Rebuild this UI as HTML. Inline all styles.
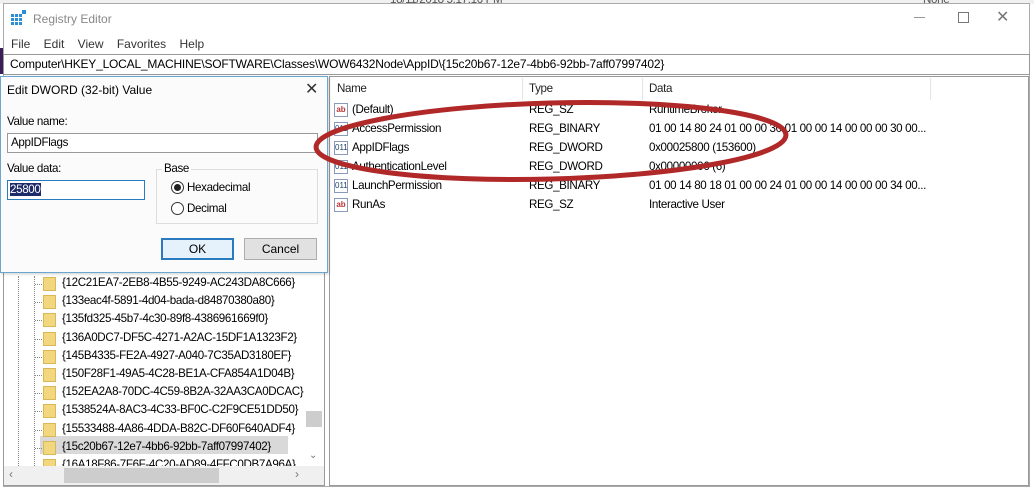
<!DOCTYPE html>
<html><head><meta charset="utf-8"><style>
*{margin:0;padding:0;box-sizing:border-box}
body{width:1034px;height:489px;overflow:hidden;background:#fff;font-family:"Liberation Sans",sans-serif;font-size:12px;color:#000;position:relative}
.a{position:absolute;white-space:nowrap}
.t{letter-spacing:-0.35px;font-size:11.6px}
.ico{position:absolute;width:14px;height:14px;border:1px solid #8a9ab8;background:#fff;font-size:8px;line-height:12px;text-align:center}
.fold{position:absolute;width:13px;height:14px;background:#f3d77e;border:1px solid #d9b957}
</style></head><body>
<div class="a" style="left:0;top:0;width:1034px;height:4px;background:#f0f0f0"></div>
<div class="a" style="left:0;top:48px;width:3px;height:26px;background:#3a1e5a"></div>
<div class="a" style="left:3px;top:3px;width:1027px;height:484px;border:1px solid #aaa;background:#fff"></div>
<svg class="a" style="left:11px;top:10px" width="16" height="16"><g fill="#2a8fd4"><rect x="0" y="4" width="3" height="3"/><rect x="4" y="4" width="3" height="3"/><rect x="8" y="4" width="3" height="3"/><rect x="0" y="8" width="3" height="3"/><rect x="4" y="8" width="3" height="3"/><rect x="8" y="8" width="3" height="3"/><rect x="0" y="12" width="3" height="3"/><rect x="4" y="12" width="3" height="3"/><rect x="8" y="12" width="3" height="3"/><rect x="11" y="0" width="4" height="4"/></g></svg>
<div class="a" style="left:33px;top:12px;font-size:12px;color:#888">Registry Editor</div>
<div class="a t" style="left:390px;top:-7px;color:#555">18/11/2018 5:17:16 PM</div>
<div class="a t" style="left:923px;top:-7px;color:#555">None</div>
<div class="a" style="left:914px;top:17px;width:11px;height:1px;background:#999"></div>
<div class="a" style="left:958px;top:12px;width:11px;height:11px;border:1px solid #777"></div>
<div class="a" style="left:996px;top:7px;font-size:16px;color:#777">✕</div>
<div class="a" style="left:11px;top:37px;font-size:12px;color:#333">File&nbsp;&nbsp;&nbsp; Edit&nbsp;&nbsp;&nbsp; View&nbsp;&nbsp;&nbsp; Favorites&nbsp;&nbsp;&nbsp; Help</div>
<div class="a" style="left:3px;top:54px;width:1027px;height:21px;border:1px solid #999;background:#fff"></div>
<div class="a" style="left:10px;top:57px;letter-spacing:-0.2px">Computer\HKEY_LOCAL_MACHINE\SOFTWARE\Classes\WOW6432Node\AppID\{15c20b67-12e7-4bb6-92bb-7aff07997402}</div>
<div class="a" style="left:3px;top:76px;width:322px;height:410px;border:1px solid #999"></div>
<div class="a" style="left:329px;top:76px;width:700px;height:410px;border:1px solid #999"></div>
<div class="a t" style="left:337px;top:82px;color:#222">Name</div>
<div class="a t" style="left:529px;top:82px;color:#222">Type</div>
<div class="a t" style="left:649px;top:82px;color:#222">Data</div>
<div class="a" style="left:522px;top:78px;width:1px;height:22px;background:#e5e5e5"></div>
<div class="a" style="left:642px;top:78px;width:1px;height:22px;background:#e5e5e5"></div>
<div class="a" style="left:930px;top:78px;width:1px;height:22px;background:#e5e5e5"></div>
<div class="ico" style="left:334px;top:103px;color:#b33;font-weight:bold">ab</div>
<div class="ico" style="left:334px;top:122px;color:#246">011</div>
<div class="ico" style="left:334px;top:141px;color:#246">011</div>
<div class="ico" style="left:334px;top:160px;color:#246">011</div>
<div class="ico" style="left:334px;top:179px;color:#246">011</div>
<div class="ico" style="left:334px;top:198px;color:#b33;font-weight:bold">ab</div>
<div class="a t" style="left:352px;top:103px">(Default)</div>
<div class="a t" style="left:352px;top:122px">AccessPermission</div>
<div class="a t" style="left:352px;top:141px">AppIDFlags</div>
<div class="a t" style="left:352px;top:160px">AuthenticationLevel</div>
<div class="a t" style="left:352px;top:179px">LaunchPermission</div>
<div class="a t" style="left:352px;top:198px">RunAs</div>
<div class="a t" style="left:529px;top:103px">REG_SZ</div>
<div class="a t" style="left:529px;top:122px">REG_BINARY</div>
<div class="a t" style="left:529px;top:141px">REG_DWORD</div>
<div class="a t" style="left:529px;top:160px">REG_DWORD</div>
<div class="a t" style="left:529px;top:179px">REG_BINARY</div>
<div class="a t" style="left:529px;top:198px">REG_SZ</div>
<div class="a t" style="left:649px;top:103px">RuntimeBroker</div>
<div class="a t" style="left:649px;top:122px">01 00 14 80 24 01 00 00 30 01 00 00 14 00 00 00 30 00...</div>
<div class="a t" style="left:649px;top:141px">0x00025800 (153600)</div>
<div class="a t" style="left:649px;top:160px">0x00000006 (6)</div>
<div class="a t" style="left:649px;top:179px">01 00 14 80 18 01 00 00 24 01 00 00 14 00 00 00 34 00...</div>
<div class="a t" style="left:649px;top:198px">Interactive User</div>
<div class="a" style="left:18px;top:276px;width:1px;height:190px;border-left:1px dotted #888"></div>
<div class="a" style="left:34px;top:276px;width:1px;height:190px;border-left:1px dotted #888"></div>
<div class="a" style="left:40px;top:436px;width:248px;height:18px;background:#d9d9d9"></div>
<div id="tree"></div>
<div class="a" style="left:306px;top:411px;width:16px;height:16px;background:#cdcdcd"></div>
<div class="a" style="left:309px;top:450px;color:#777;font-size:10px">⌄</div>
<div class="a" style="left:4px;top:466px;width:320px;height:19px;background:#f0f0f0"></div>
<div class="a" style="left:64px;top:468px;width:155px;height:15px;background:#cdcdcd"></div>
<div class="a" style="left:9px;top:467px;color:#777">‹</div>
<div class="a" style="left:295px;top:467px;color:#777">›</div>
<div class="a" style="left:0;top:76px;width:328px;height:197px;background:#fbfbfb;border:1px solid #6aa6cf;box-shadow:1px 1px 3px rgba(0,0,0,.2)"></div>
<div class="a" style="left:7px;top:83px;font-size:12px">Edit DWORD (32-bit) Value</div>
<div class="a" style="left:305px;top:79px;font-size:16px;color:#333">✕</div>
<div class="a t" style="left:7px;top:115px">Value name:</div>
<div class="a t" style="left:7px;top:133px;width:311px;height:20px;border:1px solid #999;background:#fff;padding:2px 3px">AppIDFlags</div>
<div class="a t" style="left:7px;top:162px">Value data:</div>
<div class="a t" style="left:7px;top:180px;width:138px;height:20px;border:1px solid #2a7ac0;background:#fff;padding:2px 2px"><span style="background:#1e2b6b;color:#fff">25800</span></div>
<div class="a" style="left:156px;top:169px;width:162px;height:55px;border:1px solid #ddd"></div>
<div class="a t" style="left:162px;top:162px;background:#fbfbfb;padding:0 2px">Base</div>
<div class="a" style="left:171px;top:181px;width:13px;height:13px;border:1px solid #333;border-radius:50%;background:#fff"><div style="width:7px;height:7px;background:#222;border-radius:50%;margin:2px"></div></div>
<div class="a t" style="left:187px;top:181px">Hexadecimal</div>
<div class="a" style="left:171px;top:202px;width:13px;height:13px;border:1px solid #333;border-radius:50%;background:#fff"></div>
<div class="a t" style="left:187px;top:202px">Decimal</div>
<div class="a" style="left:161px;top:238px;width:73px;height:22px;border:2px solid #2a7ac0;background:#e5f1fb;text-align:center;line-height:18px">OK</div>
<div class="a" style="left:244px;top:238px;width:73px;height:22px;border:1px solid #adadad;background:#e1e1e1;text-align:center;line-height:20px">Cancel</div>
<svg class="a" style="left:0;top:0" width="1034" height="489"><ellipse cx="551" cy="141" rx="235" ry="38" transform="rotate(-1.5 551 141)" fill="none" stroke="#b02828" stroke-width="5"/></svg>
<script>
var t=["{12C21EA7-2EB8-4B55-9249-AC243DA8C666}","{133eac4f-5891-4d04-bada-d84870380a80}","{135fd325-45b7-4c30-89f8-4386961669f0}","{136A0DC7-DF5C-4271-A2AC-15DF1A1323F2}","{145B4335-FE2A-4927-A040-7C35AD3180EF}","{150F28F1-49A5-4C28-BE1A-CFA854A1D04B}","{152EA2A8-70DC-4C59-8B2A-32AA3CA0DCAC}","{1538524A-8AC3-4C33-BF0C-C2F9CE51DD50}","{15533488-4A86-4DDA-B82C-DF60F640ADF4}","{15c20b67-12e7-4bb6-92bb-7aff07997402}","{16A18F86-7F6F-4C20-AD89-4FFC0DB7A96A}"];
var h="";for(var i=0;i<t.length;i++){var y=276+i*18.2;h+='<div class="fold" style="left:43px;top:'+(y+1)+'px"></div><div class="a" style="left:35px;top:'+(y+8)+'px;width:7px;border-top:1px dotted #888"></div><div class="a t" style="left:62px;top:'+y+'px;width:242px;overflow:hidden;height:17px">'+t[i]+'</div>';}
document.getElementById('tree').outerHTML=h;
</script>
</body></html>
